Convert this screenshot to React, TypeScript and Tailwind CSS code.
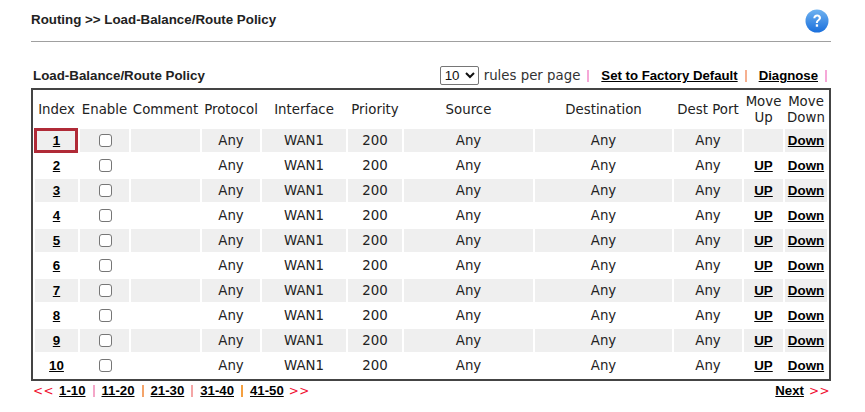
const widths = [43, 49, 69, 58, 84, 54, 129, 137, 68, 39, 42];
const rows = Array.from({ length: 10 }, (_, i) => i + 1);
const pages = ["1-10", "11-20", "21-30", "31-40", "41-50"];

function Check() {
  return <span className="inline-block w-[13px] h-[13px] ml-[2px] rounded-[3px] border border-[#767676] bg-white align-middle" />;
}

export default function App() {
  return (
    <div className="w-[865px] h-[412px] bg-white overflow-hidden pt-[9px] pl-[31px] pr-[34px] text-[13.33px] text-[#111] font-['DejaVu_Sans',sans-serif]">
      <div className="flex items-center justify-between h-[24px] pr-[2px]">
        <span className="font-['Liberation_Sans',sans-serif] font-bold text-[13.33px] text-[#222] relative top-[-1px]">Routing &gt;&gt; Load-Balance/Route Policy</span>
        <svg width="24" height="24" viewBox="0 0 24 24">
          <defs>
            <linearGradient id="q" x1="0" y1="0" x2="0" y2="1">
              <stop offset="0" stopColor="#6fb2f0" />
              <stop offset="1" stopColor="#1a6fdc" />
            </linearGradient>
          </defs>
          <circle cx="12" cy="12" r="11.5" fill="url(#q)" />
          <path d="M8.3 9.2c0-2.3 1.7-3.7 3.9-3.7s3.8 1.3 3.8 3.3c0 2.6-3.1 2.9-3.1 5.2h-2c0-3.2 2.9-3.4 2.9-5.1 0-.9-.7-1.5-1.6-1.5-1 0-1.8.7-1.8 1.8z" fill="#fff" />
          <rect x="10.8" y="15.3" width="2.3" height="2.4" fill="#fff" />
        </svg>
      </div>
      <div className="h-px bg-[#a0a0a0] mt-[8px] mb-[23px]" />
      <div className="flex items-center justify-between h-[22px] pl-[2px] pr-[4px]">
        <span className="font-['Liberation_Sans',sans-serif] font-bold text-[13.33px] text-[#222]">Load-Balance/Route Policy</span>
        <div className="flex items-center">
          <select defaultValue="10" className="w-[39px] h-[19px] border border-[#767676] rounded-[2px] text-[13.33px] font-['Liberation_Sans',sans-serif] bg-white mr-[5px]">
            <option>10</option>
          </select>
          <span className="text-[#333]">rules per page</span>
          <span className="ml-[7px] w-[2px] h-[12px] bg-[#f6a8d8]" />
          <a className="ml-[12px] underline font-['Liberation_Sans',sans-serif] font-bold text-[13.2px] text-black">Set to Factory Default</a>
          <span className="ml-[7px] w-[2px] h-[12px] bg-[#f6b090]" />
          <a className="ml-[12px] underline font-['Liberation_Sans',sans-serif] font-bold text-[13.2px] text-black">Diagnose</a>
          <span className="ml-[7px] w-[2px] h-[12px] bg-[#f6a8d8]" />
        </div>
      </div>
      <table className="w-[800px] table-fixed border-2 border-[#444] border-separate border-spacing-[2px] mt-px text-[13.33px] text-[#222]">
        <colgroup>
          {widths.map((w, i) => <col key={i} style={{ width: w }} />)}
        </colgroup>
        <thead>
          <tr className="h-[35px]">
            {["Index", "Enable", "Comment", "Protocol", "Interface", "Priority", "Source", "Destination", "Dest Port"].map((h) => (
              <th key={h} className="font-normal p-0 whitespace-nowrap">{h}</th>
            ))}
            <th className="font-normal p-0 leading-[16px]">Move<br />Up</th>
            <th className="font-normal p-0 leading-[16px]">Move<br />Down</th>
          </tr>
        </thead>
        <tbody>
          {rows.map((r) => {
            const cell = `h-[23px] p-0 text-center ${r % 2 === 1 ? "bg-[#efefef]" : "bg-white"}`;
            const link = "underline font-['Liberation_Sans',sans-serif] font-bold text-[13.33px] text-black";
            return (
              <tr key={r}>
                <td className={`${cell} relative`}>
                  <a className={link}>{r}</a>
                  {r === 1 && <span className="absolute left-[-1px] top-[-1px] w-[44px] h-[25px] border-[3px] border-[#b02a37]" />}
                </td>
                <td className={cell}><Check /></td>
                <td className={cell} />
                <td className={cell}>Any</td>
                <td className={cell}>WAN1</td>
                <td className={cell}>200</td>
                <td className={cell}>Any</td>
                <td className={cell}>Any</td>
                <td className={cell}>Any</td>
                <td className={cell}>{r > 1 && <a className={link}>UP</a>}</td>
                <td className={cell}><a className={link}>Down</a></td>
              </tr>
            );
          })}
        </tbody>
      </table>
      <div className="flex items-center justify-between h-[20px] pl-[2px] pr-[1px] font-['Liberation_Sans',sans-serif] text-[13.2px]">
        <div className="flex items-center">
          <span className="text-[#f01030] font-['DejaVu_Sans',sans-serif] text-[12px] mr-[5px] tracking-[0.5px]">&lt;&lt;</span>
          {pages.map((p, i) => (
            <span key={p} className="flex items-center">
              <a className="underline font-bold text-black">{p}</a>
              {i < 4 && <span className={`mx-[7px] w-[2px] h-[12px] ${["bg-[#f4a6c8]", "bg-[#f4a46a]", "bg-[#f4a6a6]", "bg-[#f4a040]"][i]}`} />}
            </span>
          ))}
          <span className="text-[#f01030] font-['DejaVu_Sans',sans-serif] text-[12px] ml-[5px] tracking-[0.5px]">&gt;&gt;</span>
        </div>
        <div className="flex items-center">
          <a className="underline font-bold text-black">Next</a>
          <span className="text-[#f01030] font-['DejaVu_Sans',sans-serif] text-[12px] ml-[5px] tracking-[0.5px]">&gt;&gt;</span>
        </div>
      </div>
    </div>
  );
}
